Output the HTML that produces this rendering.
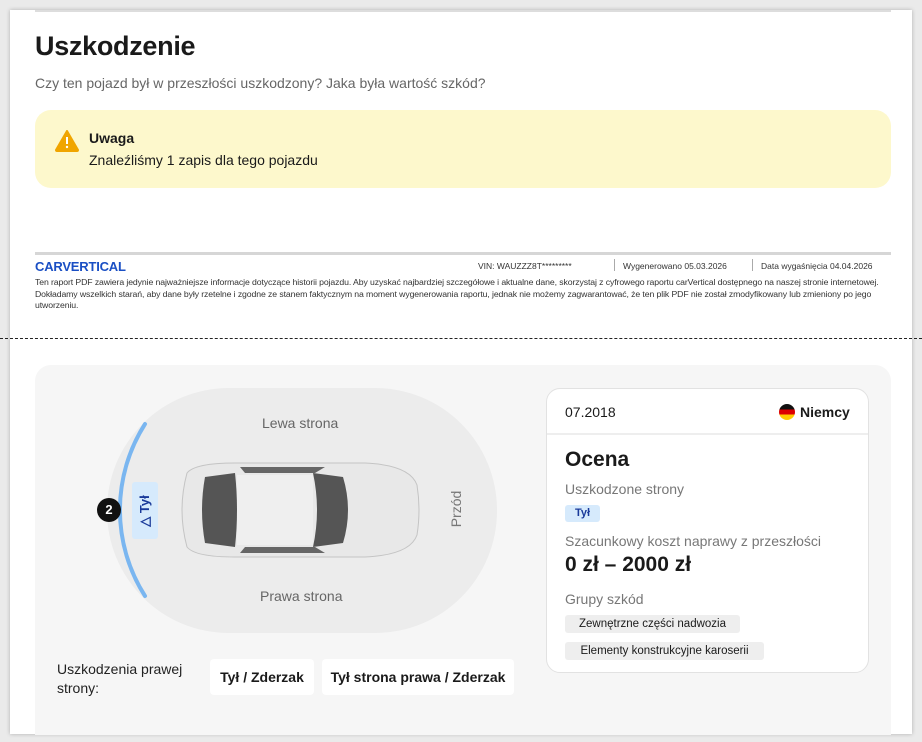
<!DOCTYPE html>
<html><head><meta charset="utf-8"><style>
*{box-sizing:border-box;margin:0;padding:0}
body{width:922px;height:742px;background:#eaeaea;font-family:"Liberation Sans",sans-serif;position:relative;overflow:hidden;color:#1a1a1a}
.page{position:absolute;left:10px;top:10px;width:902px;height:724px;background:#fff;box-shadow:0 0 4px rgba(0,0,0,.25)}
.abs{position:absolute}
</style></head><body>
<div class="page"></div>
<div class="abs" style="left:35px;top:10px;width:856px;height:2px;background:#ddd"></div>
<div class="abs" style="left:35px;top:31px;font-size:27px;font-weight:bold;letter-spacing:-0.3px">Uszkodzenie</div>
<div class="abs" style="left:35px;top:75px;font-size:14px;color:#666">Czy ten pojazd był w przeszłości uszkodzony? Jaka była wartość szkód?</div>
<div class="abs" style="left:35px;top:110px;width:856px;height:78px;background:#fdf8cc;border-radius:16px"></div>
<svg class="abs" style="left:55px;top:130px" width="24" height="22" viewBox="0 0 24 22"><path d="M12 1 L23 20 Q23 21 22 21 L2 21 Q1 21 1 20 Z" fill="#f0a500" stroke="#f0a500" stroke-linejoin="round" stroke-width="2"/><rect x="11" y="7" width="2" height="7" fill="#fff"/><circle cx="12" cy="17" r="1.2" fill="#fff"/></svg>
<div class="abs" style="left:89px;top:130px;font-size:14px;font-weight:bold">Uwaga</div>
<div class="abs" style="left:89px;top:152px;font-size:14px">Znaleźliśmy 1 zapis dla tego pojazdu</div>

<div class="abs" style="left:35px;top:252px;width:856px;height:3px;background:#d6d6d6"></div>
<div class="abs" style="left:35px;top:259px;font-size:13px;font-weight:bold;color:#1a4fc4;letter-spacing:-0.2px">CARVERTICAL</div>
<div class="abs" style="left:478px;top:261px;font-size:8.5px;color:#333">VIN: WAUZZZ8T*********</div>
<div class="abs" style="left:614px;top:259px;width:1px;height:12px;background:#aaa"></div>
<div class="abs" style="left:623px;top:261px;font-size:8.5px;color:#333">Wygenerowano 05.03.2026</div>
<div class="abs" style="left:752px;top:259px;width:1px;height:12px;background:#aaa"></div>
<div class="abs" style="left:761px;top:261px;font-size:8.5px;color:#333">Data wygaśnięcia 04.04.2026</div>
<div class="abs" style="left:35px;top:277px;width:848px;font-size:8.7px;line-height:11.5px;color:#333;letter-spacing:-0.1px">Ten raport PDF zawiera jedynie najważniejsze informacje dotyczące historii pojazdu. Aby uzyskać najbardziej szczegółowe i aktualne dane, skorzystaj z cyfrowego raportu carVertical dostępnego na naszej stronie internetowej. Dokładamy wszelkich starań, aby dane były rzetelne i zgodne ze stanem faktycznym na moment wygenerowania raportu, jednak nie możemy zagwarantować, że ten plik PDF nie został zmodyfikowany lub zmieniony po jego utworzeniu.</div>
<div class="abs" style="left:0;top:338px;width:922px;border-top:1.5px dashed #222"></div>

<div class="abs" style="left:35px;top:365px;width:856px;height:370px;background:#f6f6f6;border-radius:16px 16px 0 0"></div>
<div class="abs" style="left:107px;top:388px;width:390px;height:245px;background:#ececec;border-radius:122px"></div>
<svg class="abs" style="left:90px;top:420px" width="70" height="185" viewBox="0 0 70 185"><path d="M55 4 A160 160 0 0 0 55 176" fill="none" stroke="#7ab6f0" stroke-width="4" stroke-linecap="round"/></svg>
<div class="abs" style="left:97px;top:498px;width:24px;height:24px;border-radius:12px;background:#111;color:#fff;font-size:13px;font-weight:bold;text-align:center;line-height:24px">2</div>
<div class="abs" style="left:132px;top:482px;width:26px;height:57px;background:#d6eafc;border-radius:3px"></div>
<div class="abs" style="left:121px;top:501px;width:48px;height:20px;transform:rotate(-90deg);color:#1a3a9a;font-size:13px;font-weight:bold;text-align:center;line-height:20px">△ Tył</div>
<div class="abs" style="left:262px;top:415px;font-size:14px;color:#666">Lewa strona</div>
<div class="abs" style="left:260px;top:588px;font-size:14px;color:#666">Prawa strona</div>
<div class="abs" style="left:432px;top:500px;width:50px;height:18px;transform:rotate(-90deg);font-size:14px;color:#777;text-align:center">Przód</div>
<svg class="abs" style="left:175px;top:455px" width="250" height="110" viewBox="0 0 250 110">
<path d="M12 18 Q20 8 60 8 L190 8 Q235 10 242 30 Q246 55 242 80 Q235 100 190 102 L60 102 Q20 102 12 92 Q2 55 12 18Z" fill="#e8e8e8" stroke="#c4c4c4"/>
<path d="M30 22 L60 18 Q64 55 60 92 L30 88 Q24 55 30 22Z" fill="#555"/>
<path d="M138 18 L168 22 Q178 55 168 88 L138 92 Q146 55 138 18Z" fill="#555"/>
<path d="M65 12 L150 12 L140 18 L70 18Z" fill="#666"/>
<path d="M65 98 L150 98 L140 92 L70 92Z" fill="#666"/>
<rect x="62" y="20" width="76" height="70" fill="#efefef"/>
</svg>
<div class="abs" style="left:57px;top:660px;font-size:14px;line-height:19px;color:#222">Uszkodzenia prawej<br>strony:</div>
<div class="abs" style="left:210px;top:659px;width:104px;height:36px;background:#fff;border-radius:4px;font-size:14px;font-weight:bold;text-align:center;line-height:36px">Tył / Zderzak</div>
<div class="abs" style="left:322px;top:659px;width:192px;height:36px;background:#fff;border-radius:4px;font-size:14px;font-weight:bold;text-align:center;line-height:36px">Tył strona prawa / Zderzak</div>

<div class="abs" style="left:546px;top:388px;width:323px;height:285px;background:#fff;border:1px solid #e2e2e2;border-radius:14px"></div>
<div class="abs" style="left:547px;top:433px;width:321px;height:2px;background:#eee"></div>
<div class="abs" style="left:565px;top:404px;font-size:14px">07.2018</div>
<div class="abs" style="left:779px;top:404px;width:16px;height:16px;border-radius:8px;background:linear-gradient(#111 0 33%,#d00 33% 66%,#fc0 66%)"></div>
<div class="abs" style="left:800px;top:404px;font-size:14px;font-weight:bold">Niemcy</div>
<div class="abs" style="left:565px;top:448px;font-size:21px;font-weight:bold">Ocena</div>
<div class="abs" style="left:565px;top:481px;font-size:14px;color:#777">Uszkodzone strony</div>
<div class="abs" style="left:565px;top:505px;width:35px;height:17px;background:#d6eafc;border-radius:3px;font-size:11px;font-weight:bold;color:#1a3a9a;text-align:center;line-height:17px">Tył</div>
<div class="abs" style="left:565px;top:533px;font-size:14px;color:#777">Szacunkowy koszt naprawy z przeszłości</div>
<div class="abs" style="left:565px;top:553px;font-size:21px;font-weight:bold">0 zł – 2000 zł</div>
<div class="abs" style="left:565px;top:591px;font-size:14px;color:#777">Grupy szkód</div>
<div class="abs" style="left:565px;top:615px;width:175px;height:18px;background:#eee;border-radius:3px;font-size:11.5px;text-align:center;line-height:18px">Zewnętrzne części nadwozia</div>
<div class="abs" style="left:565px;top:642px;width:199px;height:18px;background:#eee;border-radius:3px;font-size:11.5px;text-align:center;line-height:18px">Elementy konstrukcyjne karoserii</div>
</body></html>
